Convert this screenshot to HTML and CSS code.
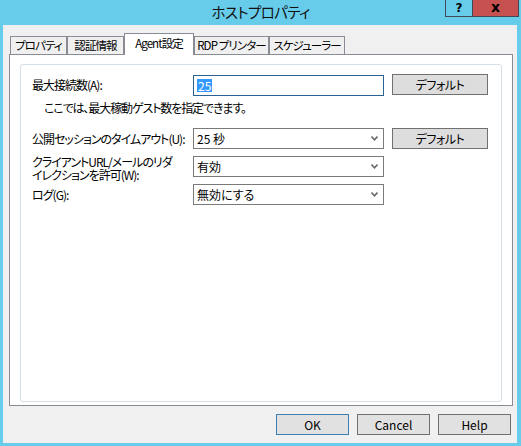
FILE: index.html
```html
<!DOCTYPE html>
<html lang="ja">
<head>
<meta charset="utf-8">
<title>ホストプロパティ</title>
<link rel="stylesheet" href="styles.css">
</head>
<body>
<div class="window">
  <div class="titlebar">
    <div class="title">ホストプロパティ</div>
    <div class="caption-btns">
      <span class="cap cap-help">?</span>
      <span class="cap cap-close">x</span>
    </div>
  </div>
  <div class="client">
    <div class="tabs">
      <div class="tab tab-props">プロパティ</div>
      <div class="tab tab-auth">認証情報</div>
      <div class="tab tab-agent active">Agent設定</div>
      <div class="tab tab-rdp">RDP プリンター</div>
      <div class="tab tab-sched">スケジューラー</div>
    </div>
    <div class="panel">
      <div class="group">
        <div class="row">
          <div class="label">最大接続数(A):</div>
          <div class="textbox"><span class="selected">25</span></div>
          <button class="btn">デフォルト</button>
        </div>
        <p class="hint">ここでは、最大稼動ゲスト数を指定できます。</p>
        <div class="row row-2">
          <div class="label">公開セッションのタイムアウト(U):</div>
          <div class="combo"><span>25 秒</span><svg class="chev" width="7" height="5" viewBox="0 0 7 5"><path d="M0.5 0.5 L3.5 3.8 L6.5 0.5" fill="none" stroke="#6b6b6b" stroke-width="1.6"/></svg></div>
          <button class="btn">デフォルト</button>
        </div>
        <div class="row">
          <div class="label label-2line">クライアントURL/メールのリダ<br>イレクションを許可(W):</div>
          <div class="combo"><span>有効</span><svg class="chev" width="7" height="5" viewBox="0 0 7 5"><path d="M0.5 0.5 L3.5 3.8 L6.5 0.5" fill="none" stroke="#6b6b6b" stroke-width="1.6"/></svg></div>
        </div>
        <div class="row">
          <div class="label">ログ(G):</div>
          <div class="combo"><span>無効にする</span><svg class="chev" width="7" height="5" viewBox="0 0 7 5"><path d="M0.5 0.5 L3.5 3.8 L6.5 0.5" fill="none" stroke="#6b6b6b" stroke-width="1.6"/></svg></div>
        </div>
      </div>
    </div>
    <div class="footer">
      <button class="btn btn-dlg btn-default">OK</button>
      <button class="btn btn-dlg">Cancel</button>
      <button class="btn btn-dlg">Help</button>
    </div>
  </div>
</div>
</body>
</html>
```

FILE: styles.css
```css
* { box-sizing: border-box; }
html, body {
  margin: 0;
  padding: 0;
}
body {
  width: 521px;
  height: 446px;
  background: #67cbea;
  font-family: "Noto Sans CJK JP", "Noto Sans", sans-serif;
  font-feature-settings: "palt" 1;
  font-size: 12px;
  color: #000;
  overflow: hidden;
}
.window {
  width: 521px;
  height: 446px;
  display: flex;
  flex-direction: column;
}
.titlebar {
  height: 25px;
  display: grid;
  grid-template-columns: 100%;
  align-items: start;
}
.title {
  grid-area: 1 / 1;
  justify-self: center;
  font-size: 14.5px;
  line-height: 24px;
  color: #111;
  letter-spacing: -0.6px;
}
.caption-btns {
  grid-area: 1 / 1;
  justify-self: end;
  display: flex;
  margin-right: 2px;
  border: 1px solid #3f4a52;
  border-top: 0;
}
.cap {
  height: 16px;
  display: flex;
  align-items: center;
  justify-content: center;
  font-family: "DejaVu Sans", sans-serif;
  font-weight: bold;
  font-size: 12px;
  line-height: 1;
}
.cap-help {
  width: 27px;
  background: #67cbea;
  border-right: 1px solid #3f4a52;
}
.cap-close {
  width: 45px;
  background: #c75050;
  font-size: 14px;
  padding-bottom: 3px;
}
.client {
  flex: 1;
  margin: 0 4px 3px 3px;
  background: #f0f0f0;
  padding: 8px 4px 8px 6px;
  display: flex;
  flex-direction: column;
}
.tabs {
  display: flex;
  height: 21px;
  padding-left: 1px;
  position: relative;
  z-index: 1;
}
.tab {
  flex: none;
  margin-top: 3px;
  height: 18px;
  border: 1px solid #898c95;
  border-bottom: 0;
  background: #f0f0f0;
  padding: 0;
  text-align: center;
  font-size: 11.5px;
  line-height: 16px;
  white-space: nowrap;
  letter-spacing: -0.9px;
}
.tab-props { width: 57px; }
.tab-auth { width: 57px; }
.tab-agent { width: 70px; }
.tab-rdp { width: 75px; }
.tab-sched { width: 76px; }
.tab.active {
  margin-top: 0;
  height: 22px;
  background: #fff;
  padding-top: 1px;
}
.panel {
  height: 352px;
  border: 1px solid #898c95;
  background: #fff;
  padding: 9px 10px 3px 10px;
}
.group {
  height: 338px;
  border: 1px solid #d5dfe5;
  border-radius: 3px;
  padding: 9px 0 0 11px;
}
.row {
  display: flex;
  align-items: center;
  height: 21px;
  margin-top: 7px;
}
.row:first-child { margin-top: 0; }
.row-2 { margin-top: 13px; }
.label {
  width: 153px;
  margin-right: 8px;
  white-space: nowrap;
  line-height: 15px;
  letter-spacing: -1px;
}
.label-2line {
  align-self: flex-start;
  line-height: 13px;
  margin-top: -1px;
}
.textbox {
  width: 191px;
  height: 21px;
  border: 1px solid #2b6294;
  background: #fff;
  padding: 0 0 0 3px;
  display: flex;
  align-items: center;
  margin-top: 2px;
}
.selected {
  background: #3399ff;
  color: #fff;
  line-height: 13px;
  padding: 0 1px;
}
.combo {
  width: 191px;
  height: 21px;
  border: 1px solid #7a7a7a;
  background: #fff;
  display: flex;
  align-items: center;
  justify-content: space-between;
  padding: 0 5px 0 3px;
}
.chev { display: block; }
.btn {
  font-family: "Noto Sans CJK JP", "Noto Sans", sans-serif;
  font-feature-settings: "palt" 1;
  font-size: 12px;
  color: #000;
  width: 96px;
  height: 21px;
  margin: 0 0 0 8px;
  padding: 0;
  border: 1px solid #707070;
  background: #dddddd;
  line-height: 18px;
  letter-spacing: -0.5px;
}
.hint {
  margin: 5px 0 0 12px;
  line-height: 15px;
  letter-spacing: -1.1px;
}
.footer {
  display: flex;
  justify-content: flex-end;
  gap: 8px;
  margin-top: 8px;
  padding-right: 2px;
}
.btn-dlg {
  width: 73px;
  margin: 0;
  background: #e1e1e1;
  letter-spacing: 0;
}
.btn-default {
  border-color: #3c7fb1;
}
```
